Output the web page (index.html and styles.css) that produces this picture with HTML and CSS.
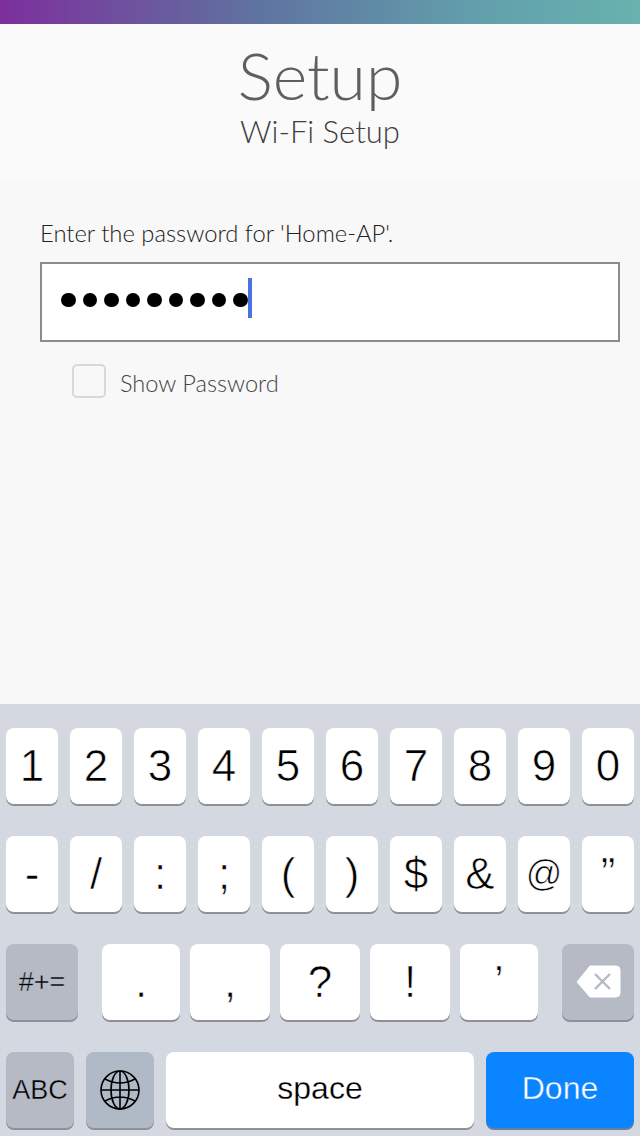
FILE: index.html
```html
<!DOCTYPE html>
<html lang="en">

<head>
    <meta charset="UTF-8">
    <meta name="viewport" content="width=device-width, initial-scale=1.0">
    <title>Setup - Wi-Fi Setup</title>

    <link rel="stylesheet" href="styles.css">
</head>

<body>
    <div class="topbar"></div>

    <div class="header">
        <h1>Setup</h1>
        <h2>Wi-Fi Setup</h2>
    </div>

    <div class="content">
        <label class="field-label">Enter the password for 'Home-AP'.</label>
        <div class="password-box">
            <span class="dot"></span><span class="dot"></span><span class="dot"></span>
            <span class="dot"></span><span class="dot"></span><span class="dot"></span>
            <span class="dot"></span><span class="dot"></span><span class="dot"></span>
            <span class="caret"></span>
        </div>
        <div class="show-password">
            <span class="checkbox"></span>
            <span>Show Password</span>
        </div>
    </div>

    <div class="keyboard">
        <div class="row">
            <div class="key">1</div>
            <div class="key">2</div>
            <div class="key">3</div>
            <div class="key">4</div>
            <div class="key">5</div>
            <div class="key">6</div>
            <div class="key">7</div>
            <div class="key">8</div>
            <div class="key">9</div>
            <div class="key">0</div>
        </div>
        <div class="row">
            <div class="key">-</div>
            <div class="key">/</div>
            <div class="key">:</div>
            <div class="key">;</div>
            <div class="key">(</div>
            <div class="key">)</div>
            <div class="key">$</div>
            <div class="key">&amp;</div>
            <div class="key key-at">@</div>
            <div class="key">”</div>
        </div>
        <div class="row row-punct">
            <div class="key key-dark key-side small">#+=</div>
            <div class="key key-narrow first-punct">.</div>
            <div class="key key-wide">,</div>
            <div class="key key-wide">?</div>
            <div class="key key-wide">!</div>
            <div class="key key-narrow">’</div>
            <div class="key key-dark key-side last-punct">
                <svg width="46" height="34" viewBox="0 0 46 34">
                    <path d="M15 1H41a4 4 0 0 1 4 4V28a4 4 0 0 1-4 4H15L2 17Z" fill="#fff" stroke="#fff" stroke-width="1" stroke-linejoin="round" />
                    <path d="M20 9L35 24M35 9L20 24" stroke="#b4b9c3" stroke-width="2.4" />
                </svg>
            </div>
        </div>
        <div class="row">
            <div class="key key-dark key-mode small">ABC</div>
            <div class="key key-dark key-mode key-globe">
                <svg width="40" height="40" viewBox="0 0 40 40" fill="none" stroke="#000" stroke-width="1.6">
                    <circle cx="20" cy="20" r="19" />
                    <ellipse cx="20" cy="20" rx="9" ry="19" />
                    <path d="M20 1V39M1 20H39M5 9Q20 17 35 9M5 31Q20 23 35 31" />
                </svg>
            </div>
            <div class="key key-space">space</div>
            <div class="key key-done">Done</div>
        </div>
    </div>
</body>

</html>
```

FILE: styles.css
```css
html,
body {
    margin: 0;
    padding: 0;
}

body {
    width: 640px;
    height: 1136px;
    overflow: hidden;
    display: flex;
    flex-direction: column;
    background-color: #f8f8f8;
    font-family: "Lato", sans-serif;
}

.topbar {
    height: 24px;
    background: linear-gradient(to right, #7d2f9c, #5f73a0 40%, #62a0ac 75%, #68b2ae);
}

.header {
    height: 156px;
    background-color: #fafafa;
    text-align: center;
    font-weight: 300;
}

.header h1 {
    margin: 0;
    padding-top: 12px;
    font-size: 66px;
    line-height: 78px;
    font-weight: 300;
    color: #5f5f5f;
}

.header h2 {
    margin: 0;
    font-size: 31px;
    line-height: 34px;
    font-weight: 300;
    color: #404040;
}

.content {
    flex: 1;
    padding: 36px 20px 0 40px;
    font-weight: 300;
}

.field-label {
    display: block;
    font-size: 23.8px;
    line-height: 34px;
    color: #222;
}

.password-box {
    box-sizing: border-box;
    height: 80px;
    margin-top: 12px;
    padding: 0 0 4px 19px;
    display: flex;
    align-items: center;
    gap: 7px;
    background-color: #fff;
    border: 2px solid #8c8c8c;
}

.dot {
    width: 14.5px;
    height: 14.5px;
    border-radius: 50%;
    background-color: #000;
}

.caret {
    width: 4px;
    height: 40px;
    margin: 0 0 4px -7px;
    background-color: #4a72e0;
}

.show-password {
    display: flex;
    align-items: flex-start;
    margin: 20px 0 0 32px;
    font-size: 23.6px;
    line-height: 42px;
    color: #444;
}

.checkbox {
    box-sizing: border-box;
    width: 34px;
    height: 34px;
    margin: 2px 14px 0 0;
    border: 2px solid #d8d8d8;
    border-radius: 5px;
    background-color: #f8f8f8;
}

.keyboard {
    box-sizing: border-box;
    height: 432px;
    padding: 24px 6px 0;
    background-color: #d4d8e0;
    font-family: "Liberation Sans", Arial, sans-serif;
}

.row {
    display: flex;
    justify-content: space-between;
    margin-bottom: 32px;
}

.key {
    box-sizing: border-box;
    width: 52px;
    height: 76px;
    display: flex;
    align-items: center;
    justify-content: center;
    background-color: #fff;
    border-radius: 8px;
    box-shadow: 0 2px 0 #8e9096;
    font-size: 44px;
    color: #000;
    -webkit-text-stroke: 0.7px #fff;
}

.key-at {
    font-size: 36px;
}

.key-dark {
    background-color: #b5bac4;
    -webkit-text-stroke: 0.4px #b5bac4;
}

.small {
    font-size: 27px;
}

.row-punct {
    justify-content: flex-start;
    gap: 10px;
}

.key-side {
    width: 72px;
}

.key-narrow {
    width: 78px;
}

.key-wide {
    width: 80px;
}

.first-punct {
    margin-left: 14px;
}

.last-punct {
    margin-left: 14px;
}

.key-mode {
    width: 68px;
}

.key-globe {
    background-color: #b0bac7;
}

.key-space {
    width: 308px;
    padding-bottom: 4px;
    font-size: 32px;
    -webkit-text-stroke: 0.3px #fff;
}

.key-done {
    width: 148px;
    padding-bottom: 4px;
    background-color: #0a84ff;
    box-shadow: 0 2px 0 #5f7fa5;
    color: #fff;
    font-size: 32px;
    -webkit-text-stroke: 0.4px #0a84ff;
}
```
